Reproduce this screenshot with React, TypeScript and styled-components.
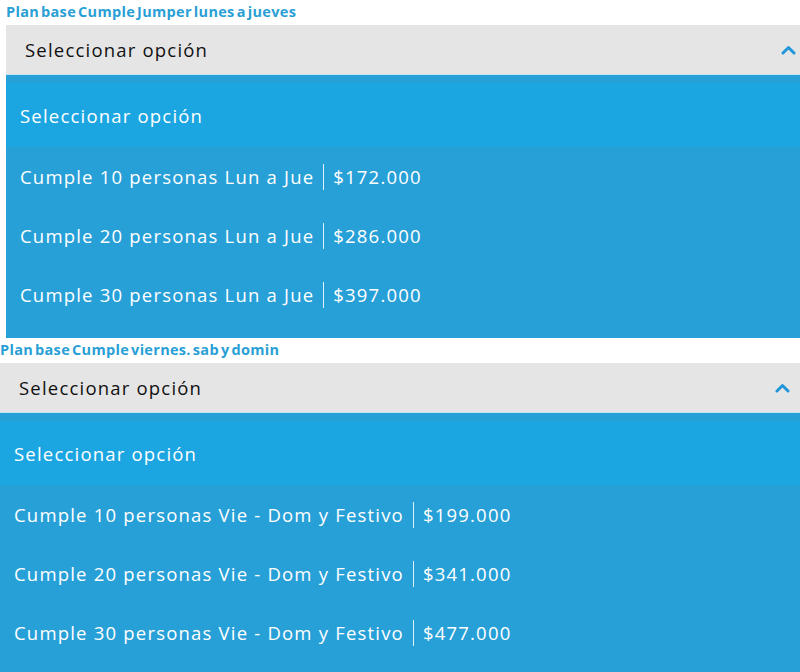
import React, { useState } from 'react';
import styled, { createGlobalStyle } from 'styled-components';

const GlobalStyle = createGlobalStyle`
    html, body {
        margin:0;
        padding:0;
        background:#ffffff;
        overflow:hidden;
    }
    body {
        font-family:"Open Sans", Roboto, sans-serif;
    }
`;

type Plan = {
    title: string;
    indent: number;
    options: { label: string; price: string }[];
};

const plans: Plan[] = [
    {
        title: "Plan base Cumple Jumper lunes a jueves",
        indent: 6,
        options: [
            { label: "Cumple 10 personas Lun a Jue", price: "$172.000" },
            { label: "Cumple 20 personas Lun a Jue", price: "$286.000" },
            { label: "Cumple 30 personas Lun a Jue", price: "$397.000" },
        ],
    },
    {
        title: "Plan base Cumple viernes. sab y domin",
        indent: 0,
        options: [
            { label: "Cumple 10 personas Vie - Dom y Festivo", price: "$199.000" },
            { label: "Cumple 20 personas Vie - Dom y Festivo", price: "$341.000" },
            { label: "Cumple 30 personas Vie - Dom y Festivo", price: "$477.000" },
        ],
    },
];

const Chevron = () => (
    <svg width="15" height="10" viewBox="0 0 15 10">
        <path d="M2 8 L7.5 2.5 L13 8" fill="none" stroke="#2196d8" strokeWidth="3" strokeLinecap="round" strokeLinejoin="round" />
    </svg>
);

const PlanSelect = ({ plan }: { plan: Plan }) => {
    const [selected, setSelected] = useState(-1);
    return (
        <Block $indent={plan.indent}>
            <Title>{plan.title}</Title>
            <Header>
                <HeaderText>Seleccionar opción</HeaderText>
                <Chevron />
            </Header>
            <List>
                <Option $active={selected === -1} onClick={() => setSelected(-1)}>
                    Seleccionar opción
                </Option>
                {plan.options.map((o, i) => (
                    <Option key={o.label} $active={selected === i} onClick={() => setSelected(i)}>
                        <span>{o.label}</span>
                        <Bar />
                        <span>{o.price}</span>
                    </Option>
                ))}
            </List>
        </Block>
    );
};

const App = () => {
    return (
        <Page>
            <GlobalStyle />
            {plans.map((p) => (
                <PlanSelect key={p.title} plan={p} />
            ))}
        </Page>
    );
};

export const Page = styled.div`
    width:800px;
    height:672px;
    overflow:hidden;
`;

export const Block = styled.section<{ $indent: number }>`
    display:flex;
    flex-direction:column;
    width:800px;
    margin-left:${(p) => p.$indent}px;
`;

export const Title = styled.div`
    height:25px;
    line-height:23px;
    font-size:14.5px;
    font-weight:700;
    letter-spacing:0.3px;
    word-spacing:-2px;
    color:#2a9fd6;
    white-space:nowrap;
`;

export const Header = styled.div`
    display:flex;
    align-items:center;
    justify-content:space-between;
    height:49px;
    padding:0 10px 0 19px;
    background:#e5e5e5;
    border-bottom:1px solid #c4e2f3;
`;

export const HeaderText = styled.span`
    font-size:18.5px;
    letter-spacing:1.2px;
    color:#111111;
`;

export const List = styled.div`
    display:flex;
    flex-direction:column;
    padding:8px 0 14px;
    background:#27a0d8;
`;

export const Option = styled.div<{ $active: boolean }>`
    display:flex;
    align-items:center;
    gap:9px;
    height:${(p) => (p.$active ? 64 : 59)}px;
    padding:0 14px;
    font-size:18.5px;
    letter-spacing:1.2px;
    color:#ffffff;
    background:${(p) => (p.$active ? "#1ba6e2" : "transparent")};
    white-space:nowrap;
    cursor:pointer;
`;

export const Bar = styled.span`
    width:1px;
    height:26px;
    background:rgba(255, 255, 255, 0.85);
`;

export default App;
